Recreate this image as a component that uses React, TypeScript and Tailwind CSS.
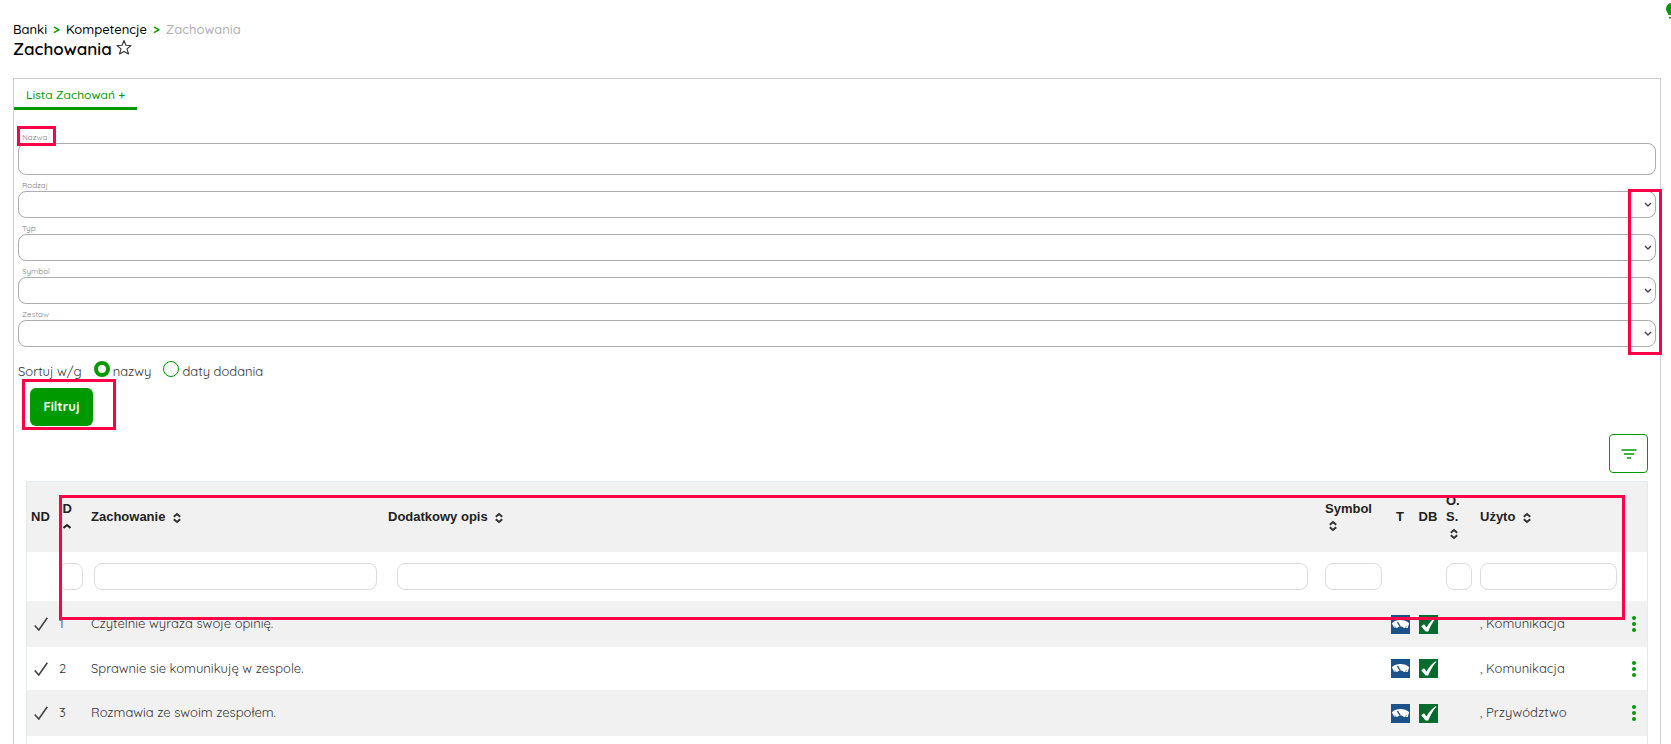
import { useState } from "react";
import clsx from "clsx";

const selects = ["Rodzaj", "Typ", "Symbol", "Zestaw"];

const rows = [
  { id: 1, name: "Czytelnie wyraża swoje opinię.", used: ", Komunikacja" },
  { id: 2, name: "Sprawnie sie komunikuję w zespole.", used: ", Komunikacja" },
  { id: 3, name: "Rozmawia ze swoim zespołem.", used: ", Przywództwo" },
];

const fieldLabel = "block h-4 pt-1 pl-1 text-[8px] leading-3 text-[#808080]";
const field = "block w-full rounded-lg border border-[#adadad] bg-white px-2 outline-none";
const columnFilter = "block h-[27px] w-full rounded-lg border border-[#dcdcdc] bg-white px-1 outline-none";
const radio =
  "size-4 shrink-0 appearance-none rounded-full border border-[#009a00] bg-white checked:border-[4px]";

function Highlight({ className }: { className: string }) {
  return <div className={clsx("pointer-events-none absolute border-[3px] border-[#ff0048]", className)} />;
}

function SortIcon() {
  return (
    <svg viewBox="0 0 8 12" className="ml-1 inline-block h-3 w-2 align-[-3px]" fill="none" stroke="#333" strokeWidth="2">
      <path d="M.8 4.800 4 2l3.200 2.800M.8 7.200 4 10l3.200-2.800" />
    </svg>
  );
}

function SortUpIcon() {
  return (
    <svg viewBox="0 0 8 12" className="ml-1 inline-block h-3 w-2 align-[-3px]" fill="none" stroke="#222" strokeWidth="2">
      <path d="M.5 8 4 5l3.500 3" />
    </svg>
  );
}

function ScaleIcon() {
  return (
    <svg viewBox="0 0 19 19" className="mx-auto block size-[19px]" role="img" aria-label="T">
      <path fill="#1b5289" d="M0 0h19v19H0z" />
      <path fill="#fff" d="M.8 8.200C5 4 14 4 18.200 8.200L16.700 13h-3.900c-1.500-2-5-2-6.600 0L3 12.600z" />
      <path stroke="#1b5289" strokeWidth="1.400" d="M6.500 7.200 9.200 11.500" />
      <path stroke="#1b5289" strokeWidth=".6" d="M3.500 10.800l1.500 2M15.500 10.800 14.500 13" />
    </svg>
  );
}

function DoneIcon() {
  return (
    <svg viewBox="0 0 19 19" className="mx-auto block size-[19px]" role="img" aria-label="DB">
      <path fill="#046c2e" d="M0 0h19v19H0z" />
      <path fill="#fff" d="M2.200 11.300 5 9.300l2.600 3.100C9.700 8.300 12.700 4.700 17 2l.4.800C13.800 6.700 11.200 11.300 9.300 16.600H6.600z" />
    </svg>
  );
}

export default function App() {
  const [sort, setSort] = useState("nazwy");

  return (
    <div className="relative flex h-screen flex-col overflow-hidden bg-white pt-[19px] pr-2.5 pl-[13px] font-['Quicksand','Lato',sans-serif] text-[13px] text-[#333]">
      <svg viewBox="0 0 12 16" className="absolute top-[3px] -right-[7px] h-4 w-3" fill="#009a00">
        <path d="M6 0a6 6 0 0 1 6 6c0 2.500-1.800 3.500-2.500 6h-7C1.800 9.500 0 8.500 0 6a6 6 0 0 1 6-6zM3 14h6v1.500H3z" />
      </svg>

      <nav className="flex gap-1.5 leading-5 font-medium text-black">
        <a href="#banki">Banki</a>
        <span className="font-bold text-[#009a00]">&gt;</span>
        <a href="#kompetencje">Kompetencje</a>
        <span className="font-bold text-[#009a00]">&gt;</span>
        <span className="text-[#b0b0b0]">Zachowania</span>
      </nav>
      <div className="flex gap-1">
        <h1 className="text-[17px] leading-5 font-semibold text-black">Zachowania</h1>
        <button aria-label="Dodaj do ulubionych" className="size-4">
          <svg viewBox="0 0 16 16" className="size-4" fill="none" stroke="#333" strokeWidth="1.100" strokeLinejoin="round">
            <path d="M8 1.500 9.900 6.300l5.100.2-4 3.300 1.500 5.200L8 12.400 3.500 15 5 9.800 1 6.500l5.100-.2z" />
          </svg>
        </button>
      </div>

      <main className="mt-[19px] flex flex-1 flex-col border border-b-0 border-[#cfcfcf]">
        <div className="flex">
          <button className="h-[31px] border-b-[3px] border-[#009a00] px-3 pt-1 text-[12px] font-medium text-[#009a00]">
            Lista Zachowań +
          </button>
        </div>

        <form className="px-1 pt-[17px]" onSubmit={(event) => event.preventDefault()}>
          <div className="relative">
            <label htmlFor="nazwa" className={fieldLabel}>
              Nazwa
            </label>
            <input id="nazwa" className={clsx(field, "h-8")} />
            <Highlight className="-top-px -left-px h-5 w-[39px]" />
          </div>
          <div className="relative">
            {selects.map((name) => (
              <div key={name}>
                <label htmlFor={name} className={fieldLabel}>
                  {name}
                </label>
                <div className="relative">
                  <select id={name} className={clsx(field, "h-[27px] appearance-none")} />
                  <svg
                    viewBox="0 0 8 6"
                    className="pointer-events-none absolute top-[11px] right-1 h-1.5 w-2"
                    fill="none"
                    stroke="#444"
                    strokeWidth="1.400"
                  >
                    <path d="M1 1l3 3 3-3" />
                  </svg>
                </div>
              </div>
            ))}
            <Highlight className="top-3.5 -right-1.5 -bottom-2 w-[34px]" />
          </div>

          <div role="radiogroup" aria-label="Sortuj w/g" className="mt-3.5 flex h-5 leading-5">
            <span className="mr-3">Sortuj w/g</span>
            {["nazwy", "daty dodania"].map((name) => (
              <label key={name} className="mr-3 flex gap-[3px]">
                <input
                  type="radio"
                  name="sort"
                  className={radio}
                  checked={sort === name}
                  onChange={() => setSort(name)}
                />
                {name}
              </label>
            ))}
          </div>

          <div className="relative mt-[7px] ml-3">
            <button type="submit" className="block h-[38px] w-[63px] rounded-md bg-[#009a00] font-bold text-white">
              Filtruj
            </button>
            <Highlight className="-top-[9px] -left-2 h-[51px] w-[94px]" />
          </div>
        </form>

        <div className="mx-3 mt-2 flex justify-end">
          <button
            aria-label="Filtry"
            className="flex size-[39px] items-center justify-center rounded border border-[#009a00]"
          >
            <svg viewBox="0 0 16 12" className="h-3 w-4" stroke="#009a00" strokeWidth="1.400">
              <path d="M.5 2h15M3 6h10M6 10h4" />
            </svg>
          </button>
        </div>

        <div className="relative mx-3 mt-2 flex-1 border border-b-0 border-[#e2eaf2]">
          <table className="w-full table-fixed border-collapse text-left">
            <colgroup>
              <col className="w-7" />
              <col className="w-8" />
              <col className="w-[297px]" />
              <col />
              <col className="w-[65px]" />
              <col className="w-7" />
              <col className="w-7" />
              <col className="w-[34px]" />
              <col className="w-[145px]" />
              <col className="w-[26px]" />
            </colgroup>
            <thead className="font-['Liberation_Sans',sans-serif] leading-4 text-[#222]">
              <tr className="h-[70px] bg-[#f1f1f1] *:px-1 *:py-0">
                <th>ND</th>
                <th>
                  ID <SortUpIcon />
                </th>
                <th>
                  Zachowanie <SortIcon />
                </th>
                <th>
                  Dodatkowy opis <SortIcon />
                </th>
                <th>
                  Symbol <SortIcon />
                </th>
                <th className="text-center">T</th>
                <th className="text-center">DB</th>
                <th>
                  O. S. <SortIcon />
                </th>
                <th>
                  Użyto <SortIcon />
                </th>
                <th />
              </tr>
              <tr className="h-[49px] *:py-0">
                <td />
                <td className="px-1">
                  <input aria-label="Filtr ID" className={columnFilter} />
                </td>
                <td className="px-[7px]">
                  <input aria-label="Filtr Zachowanie" className={columnFilter} />
                </td>
                <td className="px-[13px]">
                  <input aria-label="Filtr Dodatkowy opis" className={columnFilter} />
                </td>
                <td className="px-1">
                  <input aria-label="Filtr Symbol" className={columnFilter} />
                </td>
                <td />
                <td />
                <td className="px-1">
                  <input aria-label="Filtr O. S." className={columnFilter} />
                </td>
                <td className="px-1">
                  <input aria-label="Filtr Użyto" className={columnFilter} />
                </td>
                <td />
              </tr>
            </thead>
            <tbody>
              {rows.map((row) => (
                <tr key={row.id} className="odd:h-[46px] odd:bg-[#f1f1f1] even:h-[43px] *:px-1 *:py-0">
                  <td>
                    <svg viewBox="0 0 14 14" className="mx-auto size-3.5" fill="none" stroke="#444" strokeWidth="1.600">
                      <path d="M.7 8.500 4.800 13 13.300.8" />
                    </svg>
                  </td>
                  <td>{row.id}</td>
                  <td>{row.name}</td>
                  <td />
                  <td />
                  <td>
                    <ScaleIcon />
                  </td>
                  <td>
                    <DoneIcon />
                  </td>
                  <td />
                  <td>{row.used}</td>
                  <td>
                    <button aria-label={`Akcje ${row.id}`} className="mx-auto block">
                      <svg viewBox="0 0 4 16" className="h-4 w-1" fill="#009a00">
                        <circle cx="2" cy="2" r="2" />
                        <circle cx="2" cy="8" r="2" />
                        <circle cx="2" cy="14" r="2" />
                      </svg>
                    </button>
                  </td>
                </tr>
              ))}
            </tbody>
          </table>
          <Highlight className="top-[13px] right-[22px] left-8 h-[125px]" />
        </div>
      </main>
    </div>
  );
}
